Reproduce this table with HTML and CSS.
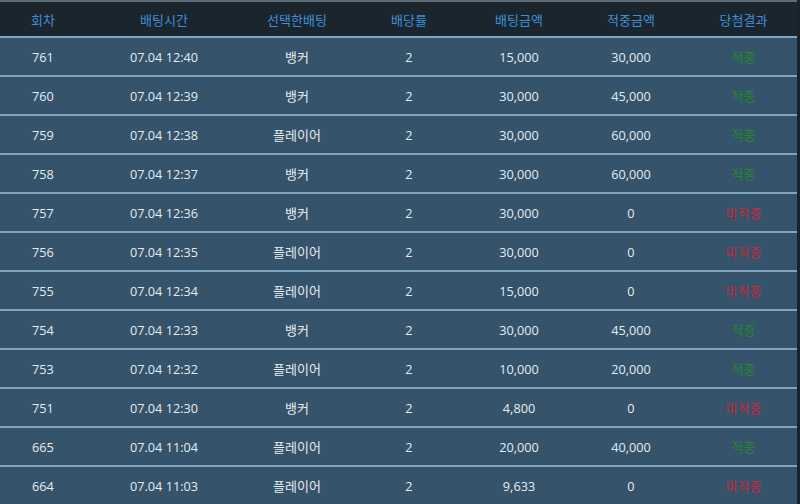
FILE: index.html
```html
<!DOCTYPE html>
<html lang="ko">
<head>
<meta charset="utf-8">
<link rel="stylesheet" href="styles.css">
</head>
<body>
<div class="wrap">
<table class="bets">
<colgroup>
<col class="c1"><col class="c2"><col class="c3"><col class="c4"><col class="c5"><col class="c6"><col class="c7">
</colgroup>
<thead>
<tr><th>회차</th><th>배팅시간</th><th>선택한배팅</th><th>배당률</th><th>배팅금액</th><th>적중금액</th><th>당첨결과</th></tr>
</thead>
<tbody>
<tr><td>761</td><td>07.04 12:40</td><td>뱅커</td><td>2</td><td>15,000</td><td>30,000</td><td class="win">적중</td></tr>
<tr><td>760</td><td>07.04 12:39</td><td>뱅커</td><td>2</td><td>30,000</td><td>45,000</td><td class="win">적중</td></tr>
<tr><td>759</td><td>07.04 12:38</td><td>플레이어</td><td>2</td><td>30,000</td><td>60,000</td><td class="win">적중</td></tr>
<tr><td>758</td><td>07.04 12:37</td><td>뱅커</td><td>2</td><td>30,000</td><td>60,000</td><td class="win">적중</td></tr>
<tr><td>757</td><td>07.04 12:36</td><td>뱅커</td><td>2</td><td>30,000</td><td>0</td><td class="lose">미적중</td></tr>
<tr><td>756</td><td>07.04 12:35</td><td>플레이어</td><td>2</td><td>30,000</td><td>0</td><td class="lose">미적중</td></tr>
<tr><td>755</td><td>07.04 12:34</td><td>플레이어</td><td>2</td><td>15,000</td><td>0</td><td class="lose">미적중</td></tr>
<tr><td>754</td><td>07.04 12:33</td><td>뱅커</td><td>2</td><td>30,000</td><td>45,000</td><td class="win">적중</td></tr>
<tr><td>753</td><td>07.04 12:32</td><td>플레이어</td><td>2</td><td>10,000</td><td>20,000</td><td class="win">적중</td></tr>
<tr><td>751</td><td>07.04 12:30</td><td>뱅커</td><td>2</td><td>4,800</td><td>0</td><td class="lose">미적중</td></tr>
<tr><td>665</td><td>07.04 11:04</td><td>플레이어</td><td>2</td><td>20,000</td><td>40,000</td><td class="win">적중</td></tr>
<tr><td>664</td><td>07.04 11:03</td><td>플레이어</td><td>2</td><td>9,633</td><td>0</td><td class="lose">미적중</td></tr>
</tbody>
</table>
</div>
</body>
</html>
```
FILE: styles.css
```css
html, body {
  margin: 0;
  padding: 0;
  background: #1a232b;
  overflow: hidden;
}
.wrap {
  width: 797px;
  border-top: 2px solid #5d6b75;
}
.bets {
  width: 797px;
  border-collapse: collapse;
  table-layout: fixed;
  font-family: "Open Sans", "Noto Sans CJK KR", sans-serif;
  font-size: 12.7px;
}
.c1 { width: 86px; }
.c2 { width: 156px; }
.c3 { width: 110px; }
.c4 { width: 114px; }
.c5 { width: 106px; }
.c6 { width: 118px; }
.c7 { width: 107px; }
.bets th {
  height: 34px;
  padding: 0;
  background: #1b252e;
  color: #3f8fd6;
  font-weight: normal;
  font-family: "Noto Sans CJK KR", sans-serif;
  font-size: 13px;
  text-align: center;
  border-bottom: 2px solid #7fa6be;
}
.bets td {
  height: 37px;
  padding: 0;
  background: #35536a;
  color: #e6ecf0;
  text-align: center;
  border-bottom: 2px solid #7fa6be;
}
.bets td:nth-child(3) {
  font-family: "Noto Sans CJK KR", sans-serif;
  font-size: 13px;
}
.bets td.win {
  color: #228a2a;
  font-family: "Noto Sans CJK KR", sans-serif;
  font-size: 13px;
}
.bets td.lose {
  color: #c8283a;
  font-family: "Noto Sans CJK KR", sans-serif;
  font-size: 13px;
}
```
